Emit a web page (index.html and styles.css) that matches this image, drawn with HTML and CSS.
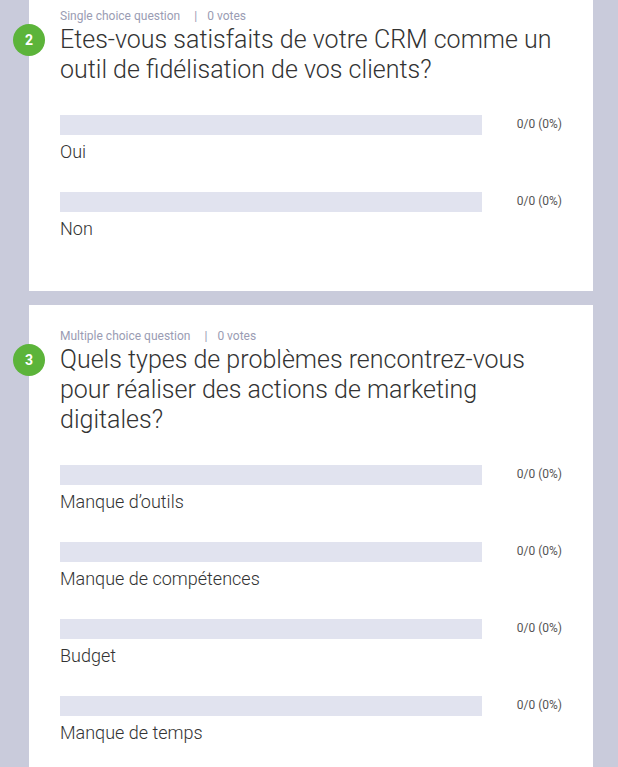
FILE: index.html
```html
<!DOCTYPE html>
<html lang="fr">
<head>
<meta charset="utf-8">
<link rel="stylesheet" href="styles.css">
</head>
<body>
<div class="page">
  <section class="card">
    <div class="meta"><span>Single choice question</span><span class="sep">|</span><span>0 votes</span></div>
    <div class="question">
      <span class="badge">2</span>
      <h2 class="title">Etes-vous satisfaits de votre CRM comme un outil de fidélisation de vos clients?</h2>
    </div>
    <div class="options">
      <div class="option">
        <div class="row"><div class="bar"></div><div class="value">0/0 (0%)</div></div>
        <div class="label">Oui</div>
      </div>
      <div class="option">
        <div class="row"><div class="bar"></div><div class="value">0/0 (0%)</div></div>
        <div class="label">Non</div>
      </div>
    </div>
  </section>
  <section class="card">
    <div class="meta"><span>Multiple choice question</span><span class="sep">|</span><span>0 votes</span></div>
    <div class="question">
      <span class="badge">3</span>
      <h2 class="title">Quels types de problèmes rencontrez-vous pour réaliser des actions de marketing digitales?</h2>
    </div>
    <div class="options">
      <div class="option">
        <div class="row"><div class="bar"></div><div class="value">0/0 (0%)</div></div>
        <div class="label">Manque d’outils</div>
      </div>
      <div class="option">
        <div class="row"><div class="bar"></div><div class="value">0/0 (0%)</div></div>
        <div class="label">Manque de compétences</div>
      </div>
      <div class="option">
        <div class="row"><div class="bar"></div><div class="value">0/0 (0%)</div></div>
        <div class="label">Budget</div>
      </div>
      <div class="option">
        <div class="row"><div class="bar"></div><div class="value">0/0 (0%)</div></div>
        <div class="label">Manque de temps</div>
      </div>
    </div>
  </section>
</div>
</body>
</html>
```

FILE: styles.css
```css
* { box-sizing: border-box; }
html, body { margin: 0; padding: 0; }
body {
  background: #c9cbdb;
  font-family: Roboto, "Liberation Sans", sans-serif;
  color: #333;
  overflow: hidden;
}
.page {
  margin-top: -15px;
  padding: 0 25px 0 29px;
  display: flex;
  flex-direction: column;
  gap: 14px;
}
.card {
  background: #fff;
  padding: 23px 31px 50px 31px;
}
.meta {
  font-size: 12px;
  line-height: 16px;
  color: #9a9cb3;
  font-weight: 400;
}
.sep { padding: 0 10px 0 14px; }
.question {
  position: relative;
  margin-top: 1px;
}
.badge {
  position: absolute;
  left: -47px;
  top: -1px;
  width: 32px;
  height: 32px;
  border-radius: 50%;
  background: #5cb43a;
  color: #fff;
  font-weight: 700;
  font-size: 14px;
  line-height: 32px;
  text-align: center;
}
.title {
  margin: 0;
  font-family: "Roboto Light", Roboto, "Liberation Sans", sans-serif;
  font-size: 25px;
  line-height: 30px;
  font-weight: 300;
  color: #333;
}
.options {
  margin-top: 30px;
  display: flex;
  flex-direction: column;
  gap: 28px;
}
.row {
  display: flex;
  align-items: center;
}
.bar {
  width: 422px;
  height: 20px;
  background: #e1e3ef;
}
.value {
  flex: 1;
  text-align: right;
  font-size: 12px;
  line-height: 16px;
  margin-bottom: 3px;
  color: #555;
}
.label {
  margin-top: 5px;
  font-family: "Roboto Light", Roboto, "Liberation Sans", sans-serif;
  font-size: 18px;
  line-height: 24px;
  font-weight: 300;
  color: #333;
}
```
